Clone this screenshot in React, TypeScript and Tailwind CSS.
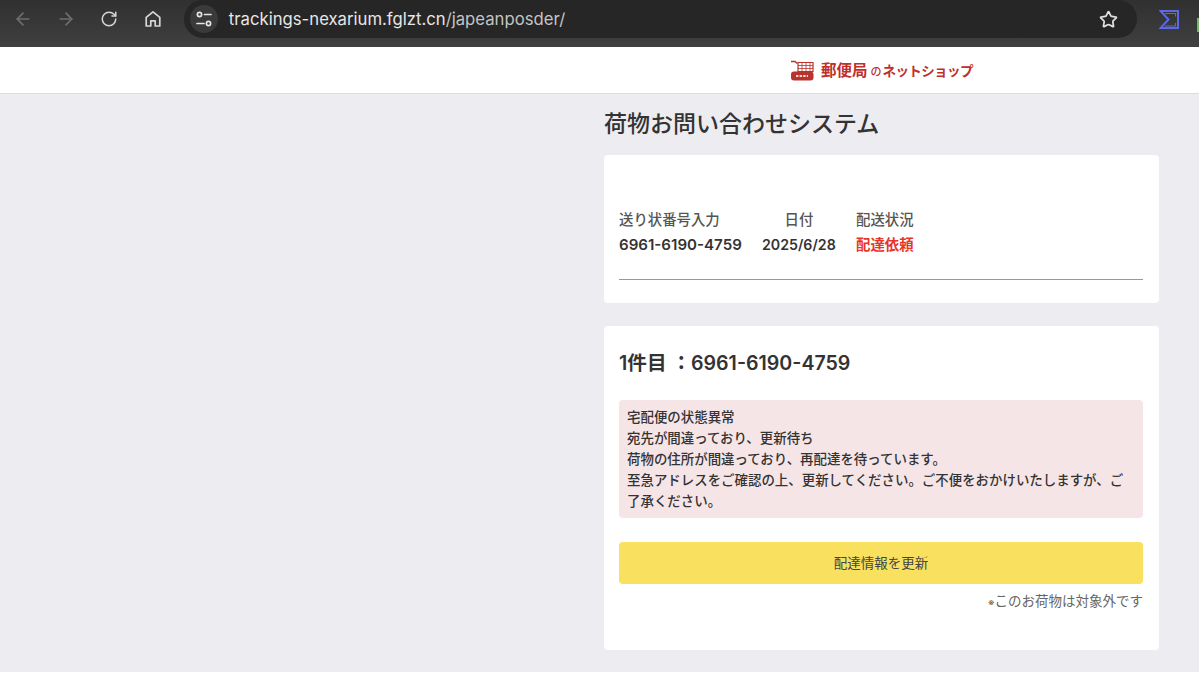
import { ArrowLeft, ArrowRight, RotateCw, Star } from "lucide-react";

function HomeIcon() {
  return (
    <svg viewBox="0 0 20 20" className="h-[20px] w-[20px]" fill="none" stroke="#d6d6d6" strokeWidth="1.7" strokeLinejoin="round">
      <path d="M3.2 8.4 10 2.8l6.8 5.6V17h-4.6v-5.2H7.8V17H3.2z" />
    </svg>
  );
}

function TuneIcon() {
  return (
    <svg viewBox="0 0 18 18" className="h-[18px] w-[18px]" fill="none" stroke="#e4e4e4" strokeWidth="1.7" strokeLinecap="round">
      <circle cx="4.5" cy="4.5" r="2.1" />
      <path d="M9.5 4.5h6.5" />
      <circle cx="13.5" cy="13.5" r="2.1" />
      <path d="M2 13.5h7" />
    </svg>
  );
}

function SigmaIcon() {
  return (
    <svg viewBox="0 0 20 19" className="h-[19px] w-[20px]" fill="none" stroke="#5b68e8" strokeWidth="2" strokeLinejoin="miter">
      <path d="M1.5 1h17.5v17H1.5l8-8.5z" />
      <path d="M6 3.5h10.5v3" strokeWidth="1" />
      <path d="M6 16h10.5v-3" strokeWidth="1" />
    </svg>
  );
}

function CartLogo() {
  return (
    <svg viewBox="0 0 24 22" className="h-[22px] w-[24px]" fill="none">
      <path d="M1 2.5h4l2.4 2" stroke="#b8332b" strokeWidth="1.5" />
      <path d="M8 3.5h15v9H8z" stroke="#b8332b" strokeWidth="1.2" />
      <path d="M12 3.5v9M16 3.5v9M20 3.5v9M8 6.5h15M8 9.5h15" stroke="#b8332b" strokeWidth="0.8" />
      <rect x="1" y="12.5" width="22.5" height="9" rx="3" fill="#b8332b" />
      <path d="M6 17h12" stroke="#f3d7d3" strokeWidth="2.2" strokeDasharray="2.4 1.2" />
    </svg>
  );
}

function BrowserBar() {
  return (
    <div className="flex h-[47px] items-center bg-gradient-to-b from-[#303030] to-[#404040] pb-[9px]">
      <div className="flex w-[184px] items-center pl-[13px]">
        <ArrowLeft className="h-[20px] w-[20px] text-[#6e6e6e]" strokeWidth={2} />
        <ArrowRight className="ml-[23px] h-[20px] w-[20px] text-[#6e6e6e]" strokeWidth={2} />
        <RotateCw className="ml-[24px] h-[18px] w-[18px] text-[#d6d6d6]" strokeWidth={2} />
        <div className="ml-[25px]">
          <HomeIcon />
        </div>
      </div>
      <div className="flex h-[38px] w-[954px] items-center rounded-full bg-[#262626] pl-[6px] pr-[19px]">
        <div className="flex h-[28px] w-[28px] items-center justify-center rounded-full bg-[#3a3a3a]">
          <TuneIcon />
        </div>
        <div className="ml-[11px] flex-1 font-['Inter',sans-serif] text-[16.7px] leading-[24px] text-[#e6e6e6]">
          trackings-nexarium.fglzt.cn<span className="text-[#c4c4c4]">/japeanposder/</span>
        </div>
        <Star className="h-[19px] w-[19px] text-[#e0e0e0]" strokeWidth={2.2} />
      </div>
      <div className="ml-[22px]">
        <SigmaIcon />
      </div>
      <div className="ml-[18px] h-[14px] w-[2px] translate-y-[6px] bg-[#7cb36a]" />
    </div>
  );
}

export default function App() {
  return (
    <div className="h-[684px] w-[1199px] overflow-hidden bg-white font-['Inter','Noto_Sans_CJK_JP',sans-serif] text-[#333333]">
      <BrowserBar />
      <header className="flex h-[47px] items-center border-b border-[#dcdcdc] bg-white pl-[790px]">
        <CartLogo />
        <div className="ml-[7px] flex items-baseline font-['Noto_Sans_CJK_JP',sans-serif] font-bold text-[#c0302a]">
          <span className="text-[15.5px] leading-none">郵便局</span>
          <span className="ml-[3px] mr-[1px] text-[11px] font-medium leading-none">の</span>
          <span className="text-[13.5px] leading-none tracking-[-0.6px]">ネットショップ</span>
        </div>
      </header>
      <main className="flex h-[578px] justify-end bg-[#edecf1] pr-[40px]">
        <div className="w-[555px]">
          <h1 className="mt-[13px] text-[23px] font-medium leading-[34px] text-[#333333]">荷物お問い合わせシステム</h1>
          <section className="mt-[14px] h-[148px] rounded-[4px] bg-white pl-[15px] pr-[16px] pt-[54px]">
            <div className="grid grid-cols-[123px_74px_auto] gap-x-[20px] text-[14.4px] font-medium text-[#555555]">
              <div className="leading-[22px]">送り状番号入力</div>
              <div className="text-center leading-[22px]">日付</div>
              <div className="leading-[22px]">配送状況</div>
              <div className="mt-[3px] whitespace-nowrap text-[15.1px] font-semibold leading-[22px] text-[#333333]">6961-6190-4759</div>
              <div className="mt-[3px] whitespace-nowrap text-[14.2px] font-semibold leading-[22px] text-[#333333]">2025/6/28</div>
              <div className="mt-[3px] font-semibold leading-[22px] text-[#e8352c]">配達依頼</div>
            </div>
            <div className="mt-[23px] border-t border-[#999999]" />
          </section>
          <section className="mt-[23px] h-[324px] rounded-[4px] bg-white pl-[15px] pr-[16px] pt-[22px]">
            <h2 className="text-[19.6px] font-semibold leading-[30px] text-[#333333]">1件目 ：6961-6190-4759</h2>
            <div className="mt-[22px] h-[118px] rounded-[4px] bg-[#f6e5e7] px-[8px] pt-[7px] text-[13.45px] font-medium leading-[21px] text-[#333333]">
              <p>宅配便の状態異常</p>
              <p>宛先が間違っており、更新待ち</p>
              <p>荷物の住所が間違っており、再配達を待っています。</p>
              <p>至急アドレスをご確認の上、更新してください。ご不便をおかけいたしますが、ご了承ください。</p>
            </div>
            <button className="mt-[24px] flex h-[42px] w-full items-center justify-center rounded-[4px] bg-[#f9e05f] text-[13.5px] text-[#444444]">
              配達情報を更新
            </button>
            <p className="mt-[7px] text-right text-[13.5px] leading-[20px] text-[#666666]">
              <span className="text-[10px]">※</span>このお荷物は対象外です
            </p>
          </section>
        </div>
      </main>
    </div>
  );
}
